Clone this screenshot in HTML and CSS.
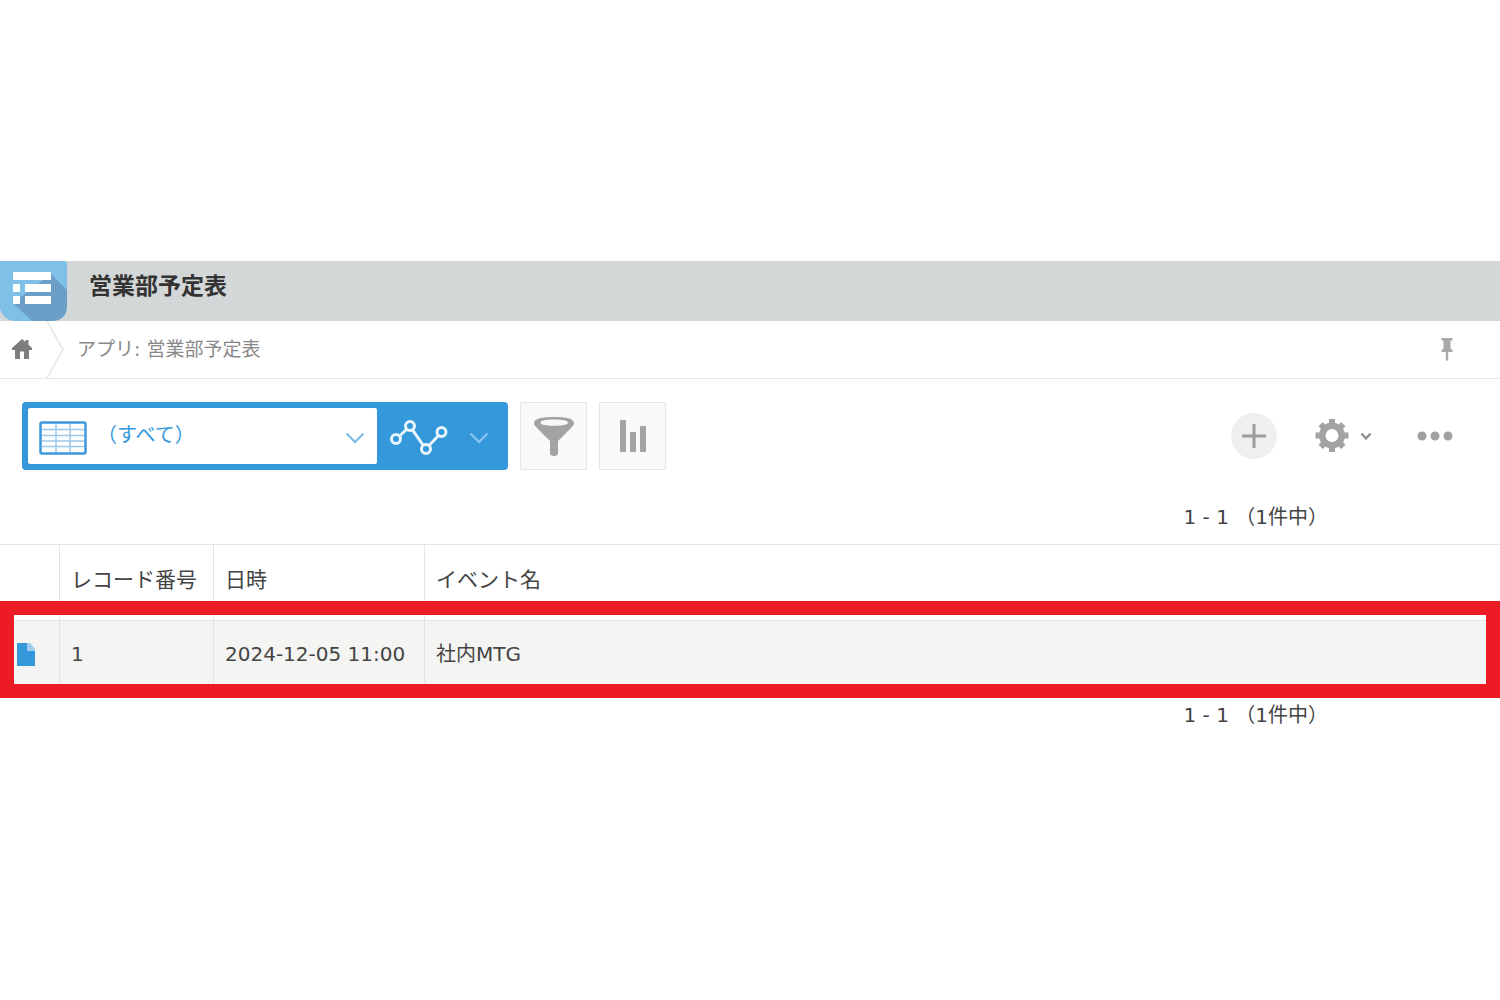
FILE: index.html
```html
<!DOCTYPE html>
<html lang="ja">
<head>
<meta charset="utf-8">
<title>営業部予定表</title>
<link rel="stylesheet" href="styles.css">
</head>
<body>
<main class="app">
  <header class="app-header">
    <svg class="app-icon" width="67" height="60" viewBox="0 0 67 60" aria-hidden="true">
      <path d="M0 0H64Q67 0 67 4V44Q67 60 51 60H16Q4 60 0 48Z" fill="#7fc0e8"/>
      <path d="M51 13L67 29V44Q67 60 51 60H32L13 42Z" fill="#6b9fc7"/>
      <path d="M13 11H51V19H13ZM13 23H20V31H13ZM25 23H51V31H25ZM13 35H20V43H13ZM25 35H51V43H25Z" fill="#fff"/>
    </svg>
    <h1 class="app-title">営業部予定表</h1>
  </header>

  <nav class="breadcrumb" aria-label="パンくず">
    <a class="home" href="#" aria-label="ホーム">
      <svg width="20" height="20" viewBox="0 0 20 20"><path d="M10 0L13.500 3V1H16.500V5.600L20 9V11H17V20H12V12.500H8V20H3V11H0V9Z" fill="#7d7d80"/></svg>
    </a>
    <svg class="separator" width="20" height="57" viewBox="0 0 20 57" aria-hidden="true"><path d="M1 0L17 28.500L1 57" fill="none" stroke="#e3e5e6" stroke-width="1.500"/></svg>
    <a class="crumb" href="#">アプリ: 営業部予定表</a>
    <button class="icon-button pin" aria-label="固定">
      <svg width="14" height="23" viewBox="0 0 14 23"><path d="M1.500 0H12.500V2.500H10.500V10.500L12.500 12V14H8.200V22L7 23L5.800 22V14H1.500V12L3.500 10.500V2.500H1.500Z" fill="#a9a9a9"/></svg>
    </button>
  </nav>

  <div class="toolbar">
    <div class="view-switch">
      <div class="view-field">
        <select class="view-select" aria-label="一覧">
          <option>（すべて）</option>
        </select>
        <svg class="grid-icon" width="48" height="34" viewBox="0 0 48 34" aria-hidden="true">
          <path d="M3 8.500H45M3 14.500H45M3 20H45M3 25.500H45M17 3V31M31 3V31" fill="none" stroke="#9cc8ea" stroke-width="1.500"/>
          <rect x="1.500" y="1.500" width="45" height="31" rx="1.500" fill="none" stroke="#3c98da" stroke-width="2.500"/>
        </svg>
        <svg class="field-arrow" width="20" height="12" viewBox="0 0 20 12" aria-hidden="true"><path d="M1.500 1.500L10 10L18.500 1.500" fill="none" stroke="#79b8e6" stroke-width="2"/></svg>
      </div>
      <button class="graph-button" aria-label="グラフ">
        <svg width="58" height="36" viewBox="0 0 58 36"><g fill="none" stroke="#e9f5fd" stroke-width="3"><circle cx="6" cy="19" r="4.500"/><circle cx="20" cy="6" r="4.500"/><circle cx="36" cy="29" r="4.500"/><circle cx="51.500" cy="12" r="4.500"/><path d="M9.500 16L16.500 9.500M22.500 9.800L33 25M39 25.500L48.500 15.500"/></g></svg>
        <svg width="20" height="12" viewBox="0 0 20 12"><path d="M1.500 1.500L10 10L18.500 1.500" fill="none" stroke="#8ec6ee" stroke-width="2"/></svg>
      </button>
    </div>
    <button class="tool-button" aria-label="絞り込む">
      <svg width="40" height="40" viewBox="0 0 40 40"><path fill-rule="evenodd" d="M0 7C0 2.500 8 1 20 1S40 2.500 40 7C40 9 38.500 10.500 36.500 12.500L24 25V37Q24 40 20 40T16 37V25L3.500 12.500C1.500 10.500 0 9 0 7ZM6.500 6.500C6.500 8.700 12 9.800 20 9.800S34 8.700 34 6.500C34 4.500 28 3.500 20 3.500S6.500 4.500 6.500 6.500Z" fill="#a3a3a3"/></svg>
    </button>
    <button class="tool-button" aria-label="集計する">
      <svg width="28" height="32" viewBox="0 0 28 32"><g fill="#a3a3a3"><rect x="1" y="0" width="6" height="32" rx="1"/><rect x="11" y="12" width="6" height="20" rx="1"/><rect x="21" y="6" width="6" height="26" rx="1"/></g></svg>
    </button>
    <div class="actions">
      <button class="icon-button add" aria-label="レコードを追加する">
        <svg width="24" height="24" viewBox="0 0 24 24"><path d="M12 0V24M0 12H24" stroke="#9c9c9c" stroke-width="3"/></svg>
      </button>
      <button class="icon-button settings" aria-label="アプリを設定">
        <svg width="36" height="36" viewBox="0 0 36 36"><g fill="#a3a3a3"><path fill-rule="evenodd" d="M18 4.500A13 13 0 1 1 18 30.500A13 13 0 1 1 18 4.500ZM18 11A6.500 6.500 0 1 0 18 24A6.500 6.500 0 1 0 18 11Z"/><path d="M15 1H21V6H15ZM15 29H21V34H15ZM1.500 14.500H6V20.500H1.500ZM30 14.500H34.500V20.500H30Z"/><path transform="rotate(45 18 17.500)" d="M15 1.500H21V6H15ZM15 29H21V33.500H15ZM2 14.500H6V20.500H2ZM30 14.500H34V20.500H30Z"/></g></svg>
        <svg width="12" height="10" viewBox="0 0 12 10"><path d="M1.500 2.500L6 7.500L10.500 2.500" fill="none" stroke="#8f8f8f" stroke-width="2.500"/></svg>
      </button>
      <button class="icon-button more" aria-label="オプション">
        <svg width="36" height="10" viewBox="0 0 36 10"><g fill="#a0a0a0"><circle cx="5" cy="5" r="4.500"/><circle cx="18" cy="5" r="4.500"/><circle cx="31" cy="5" r="4.500"/></g></svg>
      </button>
    </div>
  </div>

  <p class="pager">1 - 1 （1件中）</p>

  <div class="records">
    <table class="record-table">
      <colgroup><col class="col-open"><col class="col-number"><col class="col-date"><col></colgroup>
      <thead>
        <tr><th></th><th scope="col">レコード番号</th><th scope="col">日時</th><th scope="col">イベント名</th></tr>
      </thead>
      <tbody>
        <tr>
          <td class="open-cell"><a class="open-link" href="#" aria-label="詳細を表示"><svg width="18" height="23" viewBox="0 0 18 23"><path d="M0 0H10V8H18V23H0Z" fill="#3498db"/><path d="M10 0H13L18 6V8H10Z" fill="#9fcdee"/></svg></a></td>
          <td>1</td>
          <td>2024-12-05 11:00</td>
          <td>社内MTG</td>
        </tr>
      </tbody>
    </table>
    <div class="highlight"></div>
  </div>

  <p class="pager pager-bottom">1 - 1 （1件中）</p>
</main>
</body>
</html>
```
FILE: styles.css
```css
* {
  box-sizing: border-box;
}

body {
  margin: 0;
  min-height: 100vh;
  display: flex;
  align-items: center;
  background: #fff;
  color: #444;
  font: 20px/30px "DejaVu Sans", "Noto Sans CJK JP", sans-serif;
}

svg {
  display: block;
  flex: none;
}

button {
  padding: 0;
  border: 0;
  background: none;
  font: inherit;
  cursor: pointer;
}

.app {
  width: 100%;
}

.app-header {
  display: flex;
  height: 60px;
  background: #d4d7d7;
}

.app-title {
  margin: 0;
  padding: 10px 0 0 22px;
  color: #333;
  font-size: 23px;
  line-height: 30px;
}

.breadcrumb {
  display: flex;
  align-items: center;
  height: 58px;
  padding-right: 46px;
  border-bottom: 1px solid #e6e8e8;
}

.home {
  padding-left: 12px;
}

.separator {
  margin-left: 14px;
}

.crumb {
  margin-left: 11px;
  color: #888;
  font-size: 19px;
  text-decoration: none;
}

.icon-button {
  display: flex;
  align-items: center;
  justify-content: center;
}

.pin {
  margin-left: auto;
}

.toolbar {
  display: flex;
  gap: 12px;
  padding: 23px 47px 32px 22px;
}

.view-switch {
  display: flex;
  width: 486px;
  height: 68px;
  padding: 6px 0;
  border-radius: 4px;
  background: #3498db;
}

.view-field {
  display: grid;
  grid-template-columns: 11px 48px 1fr 20px 12px;
  align-items: center;
  width: 349px;
  margin-left: 6px;
}

.view-select {
  grid-area: 1 / 1 / 2 / -1;
  width: 100%;
  height: 56px;
  padding: 0 32px 2px 69px;
  border: 0;
  border-radius: 2px;
  background: #fff;
  color: #3498db;
  font: inherit;
  appearance: none;
}

.grid-icon,
.field-arrow {
  margin-top: 4px;
  pointer-events: none;
}

.grid-icon {
  grid-area: 1 / 2;
}

.field-arrow {
  grid-area: 1 / 4;
}

.graph-button {
  display: flex;
  flex: 1;
  align-items: center;
  justify-content: space-between;
  padding: 4px 19px 0 13px;
}

.tool-button {
  display: flex;
  align-items: center;
  justify-content: center;
  width: 67px;
  height: 68px;
  border: 1px solid #e3e7e8;
  background: #f7f9fa;
}

.actions {
  display: flex;
  align-items: center;
  margin-left: auto;
}

.add {
  width: 46px;
  height: 46px;
  border-radius: 50%;
  background: #efefef;
}

.settings {
  gap: 10px;
  margin: 0 45px 0 37px;
}

.pager {
  margin: 0;
  padding: 0 172px 12px 0;
  text-align: right;
}

.pager-bottom {
  padding-bottom: 10px;
}

.records {
  position: relative;
  margin-bottom: 12px;
}

.record-table {
  width: 100%;
  border-collapse: separate;
  border-spacing: 0;
  table-layout: fixed;
}

.col-open {
  width: 60px;
}

.col-number {
  width: 154px;
}

.col-date {
  width: 211px;
}

th,
td {
  padding: 0 0 0 11px;
  border-top: 1px solid #e3e5e6;
  border-right: 1px solid #e3e5e6;
  text-align: left;
  white-space: nowrap;
}

th:last-child,
td:last-child {
  border-right: 0;
}

th {
  height: 76px;
  padding-bottom: 5px;
  font-size: 21px;
  font-weight: 400;
}

td {
  height: 68px;
  background: #f4f4f3;
}

.open-cell {
  padding-left: 17px;
}

.open-link {
  display: block;
}

/* Frame that marks the selected record */
.highlight {
  position: absolute;
  right: 0;
  bottom: -10px;
  left: 0;
  height: 97px;
  border: 14px solid #ed1c24;
  pointer-events: none;
}
```
